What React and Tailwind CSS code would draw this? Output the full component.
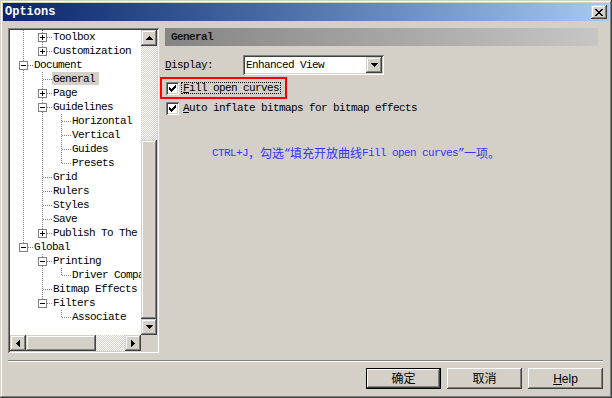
import React from "react";

const MONO = "font-['Liberation_Mono',monospace] text-[11px] tracking-[-0.6px]";
const RAISED =
  "shadow-[inset_-1px_-1px_#404040,inset_1px_1px_#d4d0c8,inset_-2px_-2px_#808080,inset_2px_2px_#ffffff]";
const PUSH =
  "shadow-[inset_-1px_-1px_#404040,inset_1px_1px_#ffffff,inset_-2px_-2px_#808080,inset_2px_2px_#d4d0c8]";
const DEFPUSH =
  "shadow-[inset_0_0_0_1px_#000000,inset_-2px_-2px_#404040,inset_2px_2px_#ffffff,inset_-3px_-3px_#808080]";
const SUNKEN =
  "shadow-[inset_1px_1px_#808080,inset_-1px_-1px_#ffffff,inset_2px_2px_#404040,inset_-2px_-2px_#d4d0c8]";
const CHECKER =
  "bg-[image:repeating-conic-gradient(#ffffff_0_25%,#d4d0c8_0_50%)] bg-[length:2px_2px]";

function Arrow({ dir }) {
  const rects = [];
  if (dir === "up" || dir === "down") {
    for (let i = 0; i < 4; i++) {
      const row = dir === "up" ? i : 3 - i;
      rects.push(<rect key={i} x={3 - i} y={row} width={1 + 2 * i} height={1} />);
    }
    return (
      <svg width="7" height="4" viewBox="0 0 7 4" shapeRendering="crispEdges">
        {rects}
      </svg>
    );
  }
  for (let i = 0; i < 4; i++) {
    const col = dir === "left" ? i : 3 - i;
    rects.push(<rect key={i} x={col} y={3 - i} width={1} height={1 + 2 * i} />);
  }
  return (
    <svg width="4" height="7" viewBox="0 0 4 7" shapeRendering="crispEdges">
      {rects}
    </svg>
  );
}

function CloseX() {
  const rows = [
    "XX....XX",
    ".XX..XX.",
    "..XXXX..",
    "...XX...",
    "..XXXX..",
    ".XX..XX.",
    "XX....XX",
  ];
  const r = [];
  rows.forEach((row, y) =>
    row.split("").forEach((c, x) => {
      if (c === "X") r.push(<rect key={`${x}-${y}`} x={x} y={y} width={1} height={1} />);
    })
  );
  return (
    <svg width="8" height="7" viewBox="0 0 8 7" shapeRendering="crispEdges">
      {r}
    </svg>
  );
}

function CheckBox() {
  const spans = [2, 3, 4, 3, 2, 1, 0];
  return (
    <div className={`w-[13px] h-[13px] p-[2px] bg-white shrink-0 ${SUNKEN}`}>
      <div className="w-[9px] h-[9px] flex items-center justify-center">
        <svg width="7" height="7" viewBox="0 0 7 7" shapeRendering="crispEdges">
          {spans.map((y, x) => (
            <rect key={x} x={x} y={y} width={1} height={3} />
          ))}
        </svg>
      </div>
    </div>
  );
}

function AncCell({ cont }) {
  return (
    <svg width="19" height="14" viewBox="0 0 19 14" shapeRendering="crispEdges" className="shrink-0">
      {cont ? (
        <line x1="9.5" y1="0" x2="9.5" y2="14" stroke="#808080" strokeDasharray="1 1" />
      ) : null}
    </svg>
  );
}

function OwnCell({ last, box }) {
  return (
    <svg width="19" height="14" viewBox="0 0 19 14" shapeRendering="crispEdges" className="shrink-0">
      <line x1="9.5" y1="0" x2="9.5" y2={last ? 7 : 14} stroke="#808080" strokeDasharray="1 1" />
      <line x1="10" y1="7.5" x2="19" y2="7.5" stroke="#808080" strokeDasharray="1 1" />
      {box ? (
        <g>
          <rect x="5.5" y="3.5" width="8" height="8" fill="#ffffff" stroke="#808080" />
          <line x1="7" y1="7.5" x2="12" y2="7.5" stroke="#000000" />
          {box === "+" ? <line x1="9.5" y1="5" x2="9.5" y2="10" stroke="#000000" /> : null}
        </g>
      ) : null}
    </svg>
  );
}

const ROWS = [
  { t: "Toolbox", l: 1, box: "+", c: [1] },
  { t: "Customization", l: 1, box: "+", c: [1], last: 1 },
  { t: "Document", l: 0, box: "-", c: [] },
  { t: "General", l: 1, c: [1], sel: 1 },
  { t: "Page", l: 1, box: "+", c: [1] },
  { t: "Guidelines", l: 1, box: "-", c: [1] },
  { t: "Horizontal", l: 2, c: [1, 1] },
  { t: "Vertical", l: 2, c: [1, 1] },
  { t: "Guides", l: 2, c: [1, 1] },
  { t: "Presets", l: 2, c: [1, 1], last: 1 },
  { t: "Grid", l: 1, c: [1] },
  { t: "Rulers", l: 1, c: [1] },
  { t: "Styles", l: 1, c: [1] },
  { t: "Save", l: 1, c: [1] },
  { t: "Publish To The Web", l: 1, box: "+", c: [1], last: 1 },
  { t: "Global", l: 0, box: "-", c: [], last: 1 },
  { t: "Printing", l: 1, box: "-", c: [0] },
  { t: "Driver Compatibility", l: 2, c: [0, 1], last: 1 },
  { t: "Bitmap Effects", l: 1, c: [0] },
  { t: "Filters", l: 1, box: "-", c: [0], last: 1 },
  { t: "Associate", l: 2, c: [0, 0], last: 1 },
];

function Tree() {
  return (
    <div className={`w-[151px] h-[325px] p-[2px] bg-white flex flex-col shrink-0 ${SUNKEN}`}>
      <div className="flex h-[305px]">
        <div className={`w-[131px] overflow-hidden pl-[4px] ${MONO}`}>
          {ROWS.map((r, i) => (
            <div key={i} className="flex h-[14px] whitespace-nowrap">
              {r.c.map((c, j) => (
                <AncCell key={j} cont={c} />
              ))}
              <OwnCell last={r.last} box={r.box} />
              <span
                className={`h-[13px] leading-[14px] pl-[1px] pr-[4px] ${
                  r.sel ? "bg-[#d4d0c8]" : ""
                }`}
              >
                {r.t}
              </span>
            </div>
          ))}
        </div>
        <div className="w-[16px] flex flex-col">
          <div className={`h-[16px] bg-[#d4d0c8] flex items-center justify-center ${RAISED}`}>
            <Arrow dir="up" />
          </div>
          <div className={`h-[94px] ${CHECKER}`} />
          <div className={`h-[179px] bg-[#d4d0c8] ${RAISED}`} />
          <div className={`h-[16px] bg-[#d4d0c8] flex items-center justify-center ${RAISED}`}>
            <Arrow dir="down" />
          </div>
        </div>
      </div>
      <div className="h-[16px] flex">
        <div className={`w-[16px] bg-[#d4d0c8] flex items-center justify-center ${RAISED}`}>
          <Arrow dir="left" />
        </div>
        <div className={`w-[70px] bg-[#d4d0c8] ${RAISED}`} />
        <div className={`w-[29px] ${CHECKER}`} />
        <div className={`w-[16px] bg-[#d4d0c8] flex items-center justify-center ${RAISED}`}>
          <Arrow dir="right" />
        </div>
        <div className="w-[16px] bg-[#d4d0c8]" />
      </div>
    </div>
  );
}

function RightPanel() {
  const CJK = "font-['Noto_Sans_CJK_SC',sans-serif] text-[12px] tracking-normal";
  return (
    <div className={`ml-[6px] w-[433px] flex flex-col ${MONO}`}>
      <div className="h-[18px] flex items-center pl-[6px] bg-linear-to-r from-[#858585] to-[#c6c6c6] font-bold text-[#141414]">
        General
      </div>
      <div className="mt-[9px] flex items-center h-[20px]">
        <span className="w-[78px] leading-[14px]">
          <u>D</u>isplay:
        </span>
        <div className={`w-[141px] h-[20px] p-[2px] bg-white flex ${SUNKEN}`}>
          <span className="flex-1 pl-[1px] leading-[16px]">Enhanced View</span>
          <div className={`w-[16px] h-[16px] bg-[#d4d0c8] flex items-center justify-center ${RAISED}`}>
            <Arrow dir="down" />
          </div>
        </div>
      </div>
      <div className="mt-[2px] -ml-[5px] w-[127px] h-[22px] border-2 border-[#ff0000] flex items-center pl-[4px]">
        <CheckBox />
        <span className="ml-[2px] border border-dotted border-black px-[1px] leading-[10px] h-[12px]">
          <u>F</u>ill open curves
        </span>
      </div>
      <div className="mt-[2px] h-[14px] flex items-center pl-[1px]">
        <CheckBox />
        <span className="ml-[4px] leading-[14px]">
          <u>A</u>uto inflate bitmaps for bitmap effects
        </span>
      </div>
      <div className="mt-[31px] pl-[47px] leading-[14px] text-[#3333ff] whitespace-nowrap flex items-center">
        <span>CTRL+J</span>
        <span className={CJK}>，勾选</span>
        <span>“</span>
        <span className={CJK}>填充开放曲线</span>
        <span>Fill open curves”</span>
        <span className={CJK}>一项。</span>
      </div>
    </div>
  );
}

function Button({ children, def }) {
  return (
    <div
      className={`w-[75px] h-[21px] bg-[#d4d0c8] flex items-center justify-center text-[12px] font-['Liberation_Sans','Noto_Sans_CJK_SC',sans-serif] ${
        def ? DEFPUSH : PUSH
      }`}
    >
      {children}
    </div>
  );
}

export default function App() {
  return (
    <div className={`w-[612px] h-[398px] bg-[#d4d0c8] p-[3px] flex flex-col text-black overflow-hidden ${RAISED}`}>
      <div className="h-[18px] shrink-0 flex items-center justify-between bg-linear-to-r from-[#0a246a] to-[#a6caf0] pl-[2px] pr-[2px]">
        <span className="font-['Liberation_Mono',monospace] text-[12px] font-bold text-white leading-[18px]">
          Options
        </span>
        <div className={`w-[16px] h-[14px] bg-[#d4d0c8] flex items-center justify-center ${RAISED}`}>
          <CloseX />
        </div>
      </div>
      <div className="mt-[7px] pl-[5px] flex">
        <Tree />
        <RightPanel />
      </div>
      <div className="mt-[7px] ml-[5px] w-[595px] h-[2px] border-t border-t-[#808080] border-b border-b-white shrink-0" />
      <div className="mt-[6px] flex justify-end pr-[6px] gap-[6px]">
        <Button def>确定</Button>
        <Button>取消</Button>
        <Button>
          <span>
            <u>H</u>elp
          </span>
        </Button>
      </div>
    </div>
  );
}
